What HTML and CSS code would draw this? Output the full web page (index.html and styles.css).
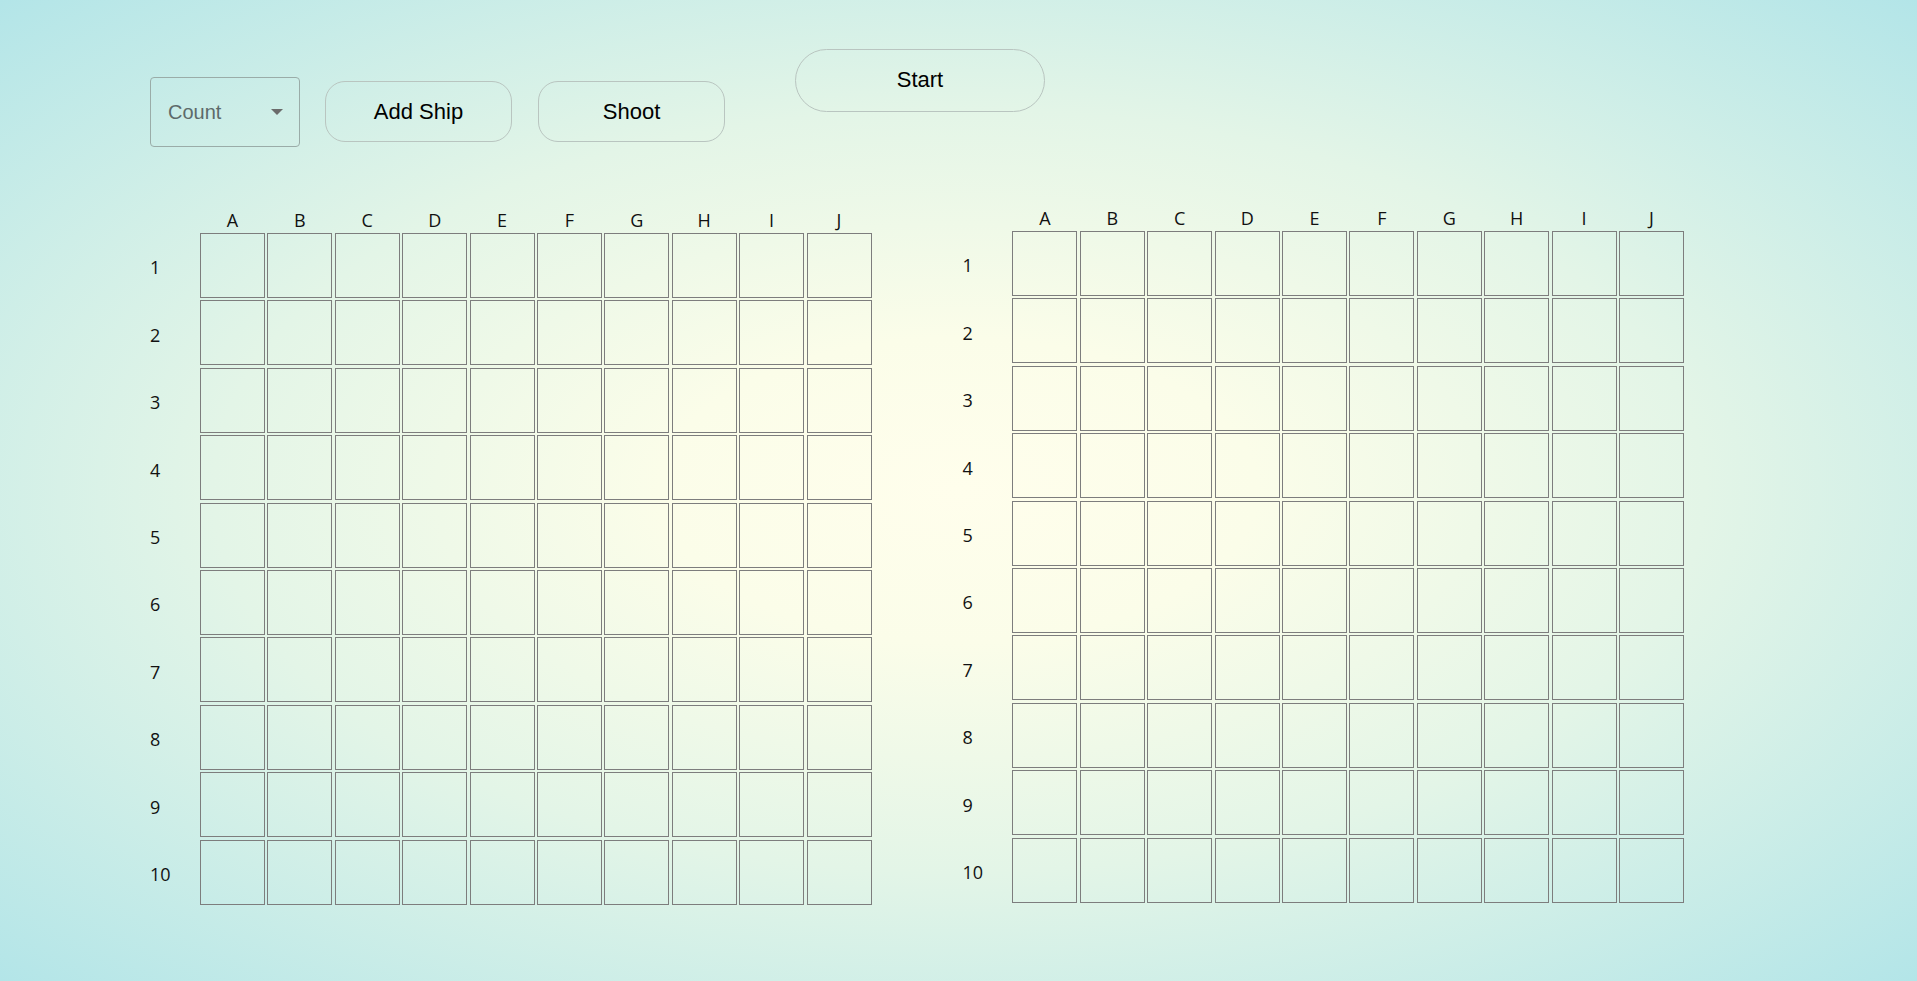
FILE: index.html
```html
<!DOCTYPE html>
<html lang="en">
<head>
    <meta charset="UTF-8">
    <meta name="viewport" content="width=device-width, initial-scale=1.0">
    <title>Battleship</title>
    <link rel="stylesheet" href="styles.css">
</head>
<body>

    <!-- Controls -->
    <div class="controles">
        <div class="select-wrap">
            <select id="count">
                <option>Count</option>
                <option>1</option>
                <option>2</option>
                <option>3</option>
                <option>4</option>
            </select>
        </div>
        <button class="btn">Add Ship</button>
        <button class="btn">Shoot</button>
        <button class="btn btn-start">Start</button>
    </div>

    <!-- Boards -->
    <div class="tableros">
        <div class="tablero tablero-jugador" id="jugador"></div>
        <div class="tablero" id="enemigo"></div>
    </div>

    <script>
        const letras = ["A", "B", "C", "D", "E", "F", "G", "H", "I", "J"];

        // Build a 10x10 board with headers and row numbers
        function crearTablero(id) {
            let html = '<div class="esquina"></div>';
            letras.forEach(l => html += `<div class="cabecera">${l}</div>`);
            for (let fila = 1; fila <= 10; fila++) {
                html += `<div class="numero">${fila}</div>`;
                letras.forEach(l => html += `<div class="celda" data-pos="${l}${fila}"></div>`);
            }
            document.getElementById(id).innerHTML = html;
        }

        crearTablero("jugador");
        crearTablero("enemigo");
    </script>

</body>
</html>
```

FILE: styles.css
```css
html {
    height: 100%;
    overflow: hidden;
}
body {
    font-family: "Open Sans", "Noto Sans", sans-serif;
    margin: 0;
    height: 100vh;
    overflow: hidden;
    background: radial-gradient(ellipse at 50% 50%, #fffeec 0%, #fbfde9 22%, #e3f5e7 55%, #b3e5e8 100%);
    color: #111;
}
.controles {
    display: flex;
    align-items: flex-start;
    padding: 49px 0 0 150px;
}
.select-wrap {
    position: relative;
    margin-top: 28px;
    margin-right: 25px;
}
.select-wrap::after {
    content: "";
    position: absolute;
    right: 17px;
    top: 32px;
    border-left: 6px solid transparent;
    border-right: 6px solid transparent;
    border-top: 6px solid #6b6b6b;
    pointer-events: none;
}
select {
    appearance: none;
    -webkit-appearance: none;
    width: 150px;
    height: 70px;
    padding: 0 0 0 17px;
    font-family: "Liberation Sans", Arial, sans-serif;
    font-size: 20px;
    color: #5d6a6a;
    background: transparent;
    border: 1px solid #9aaca8;
    border-radius: 4px;
}
.btn {
    width: 187px;
    height: 61px;
    margin-top: 32px;
    margin-right: 26px;
    font-family: "Liberation Sans", Arial, sans-serif;
    font-size: 22px;
    color: #000;
    background: transparent;
    border: 1px solid #b9c5c0;
    border-radius: 20px;
    cursor: pointer;
}
.btn:hover {
    background-color: rgba(255, 255, 255, 0.3);
}
.btn-start {
    width: 250px;
    height: 63px;
    margin-top: 0;
    margin-left: 44px;
    border-radius: 32px;
    padding-bottom: 2px;
}
.tableros {
    display: flex;
    align-items: flex-start;
    gap: 91px;
    margin-top: 59px;
    padding-left: 150px;
}
.tablero {
    display: grid;
    grid-template-columns: 47.6px repeat(10, 65px);
    grid-template-rows: 22.6px repeat(10, 65px);
    gap: 2.4px;
}
.tablero-jugador {
    margin-top: 2px;
}
.cabecera {
    font-size: 18px;
    line-height: 25px;
    height: 22.6px;
    text-align: center;
}
.numero {
    font-size: 18px;
    display: flex;
    align-items: center;
    padding-top: 4px;
}
.celda {
    box-sizing: border-box;
    border: 1px solid #7d7d7d;
    cursor: pointer;
}
```
